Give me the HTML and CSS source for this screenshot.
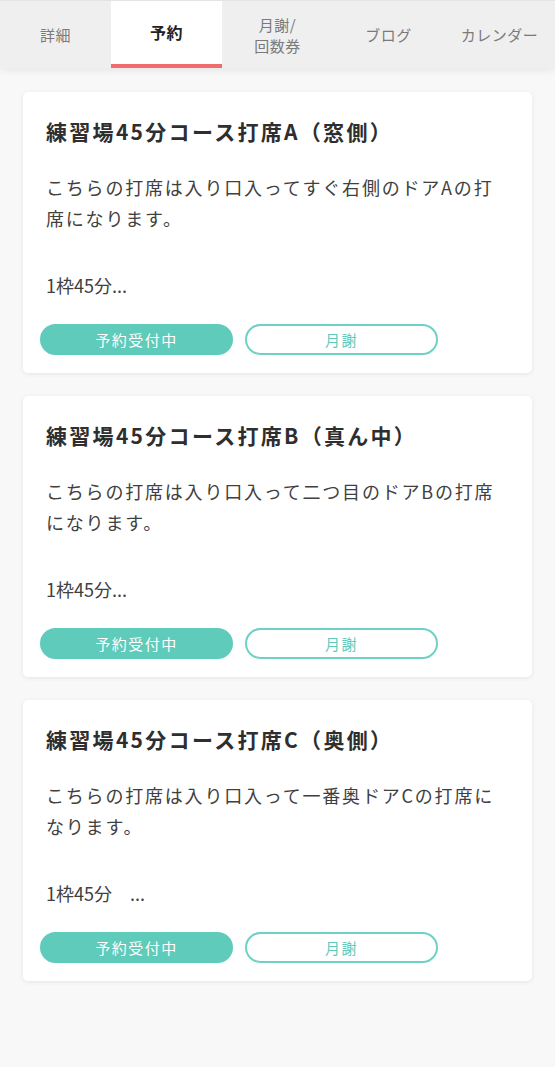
FILE: index.html
```html
<!DOCTYPE html>
<html lang="ja">
<head>
<meta charset="utf-8">
<link rel="stylesheet" href="styles.css">
</head>
<body>
<nav class="tabs">
  <div class="tab">詳細</div>
  <div class="tab active">予約</div>
  <div class="tab two">月謝/<br>回数券</div>
  <div class="tab">ブログ</div>
  <div class="tab">カレンダー</div>
</nav>
<main class="list">
  <section class="card">
    <h2 class="title">練習場45分コース打席A（窓側）</h2>
    <p class="desc">こちらの打席は入り口入ってすぐ右側のドアAの打席になります。</p>
    <p class="meta">1枠45分...</p>
    <div class="btns"><span class="btn fill">予約受付中</span><span class="btn line">月謝</span></div>
  </section>
  <section class="card">
    <h2 class="title">練習場45分コース打席B（真ん中）</h2>
    <p class="desc">こちらの打席は入り口入って二つ目のドアBの打席になります。</p>
    <p class="meta">1枠45分...</p>
    <div class="btns"><span class="btn fill">予約受付中</span><span class="btn line">月謝</span></div>
  </section>
  <section class="card">
    <h2 class="title">練習場45分コース打席C（奥側）</h2>
    <p class="desc">こちらの打席は入り口入って一番奥ドアCの打席になります。</p>
    <p class="meta">1枠45分　...</p>
    <div class="btns"><span class="btn fill">予約受付中</span><span class="btn line">月謝</span></div>
  </section>
</main>
</body>
</html>
```
FILE: styles.css
```css
* { box-sizing: border-box; }
html, body { margin: 0; padding: 0; }
body {
  background: #f8f8f8;
  font-family: "Noto Sans CJK JP", "Noto Sans", sans-serif;
  color: #333;
  min-height: 1067px;
}
.tabs {
  display: grid;
  grid-template-columns: repeat(5, 1fr);
  height: 68px;
  background: #efefef;
  border-top: 1px solid #e4e4e4;
  box-shadow: 0 2px 8px rgba(0,0,0,0.08);
  position: relative;
  z-index: 1;
}
.tab {
  display: flex;
  align-items: center;
  justify-content: center;
  text-align: center;
  font-size: 15px;
  letter-spacing: 0.5px;
  color: #7a7a7a;
  line-height: 21px;
}
.tab.active {
  background: #fff;
  color: #222;
  font-weight: 700;
  font-size: 16px;
  border-bottom: 4px solid #ef6d6d;
}
.list {
  display: flex;
  flex-direction: column;
  gap: 23px;
  padding: 24px 23px 40px;
}
.card {
  background: #fff;
  border-radius: 5px;
  box-shadow: 0 1px 5px rgba(0,0,0,0.08);
  padding: 24px 23px 16px;
  height: 281px;
}
.title {
  margin: 0;
  font-size: 21px;
  line-height: 30px;
  font-weight: 700;
  letter-spacing: 2.3px;
  color: #2e2e2e;
}
.desc {
  margin: 26px 0 0;
  font-size: 18px;
  line-height: 31px;
  letter-spacing: 0.1em;
  color: #404040;
}
.meta {
  margin: 36px 0 0;
  font-size: 18px;
  line-height: 31px;
  color: #404040;
}
.btns {
  display: flex;
  gap: 12px;
  margin: 23px 0 0 -6px;
}
.btn {
  width: 193px;
  height: 31px;
  border-radius: 16px;
  display: flex;
  align-items: center;
  justify-content: center;
  font-size: 15px;
  letter-spacing: 1.5px;
}
.btn.fill {
  background: #5ecbbb;
  color: #fff;
}
.btn.line {
  background: #fff;
  border: 2px solid #6fd0c4;
  color: #5ecbbb;
}
```
